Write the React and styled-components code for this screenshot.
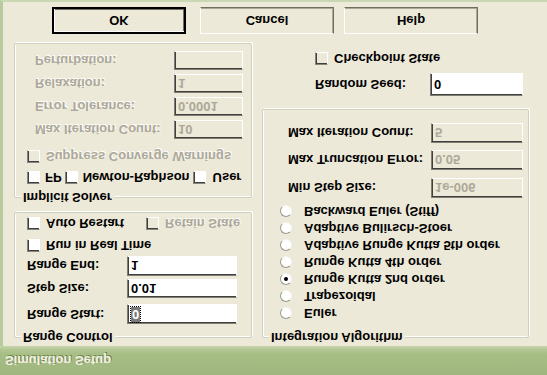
import React from 'react';
import styled, { createGlobalStyle, css } from 'styled-components';

const GlobalStyle = createGlobalStyle`
  html, body {
    margin: 0;
    padding: 0;
    overflow: hidden;
    background: #ece9d8;
  }
`;

const FONT = `'Liberation Sans', Arial, sans-serif`;

const Window = styled.div`
  width: 547px;
  height: 375px;
  box-sizing: border-box;
  display: flex;
  flex-direction: column;
  background: #ece9d8;
  font-family: ${FONT};
  font-size: 13px;
  font-weight: 700;
  color: #000;
  transform: scaleY(-1);
  overflow: hidden;
`;

const TitleBar = styled.div`
  height: 29px;
  flex: 0 0 29px;
  display: flex;
  align-items: center;
  padding-left: 5px;
  background: linear-gradient(to bottom, #9fb77e 0%, #a6bd84 70%, #b5c897 90%, #c7d6ad 100%);
  color: #f4f1e4;
  text-shadow: 1px 1px 0 #6f8550;
  font-size: 13px;
  font-weight: 700;
`;

const Body = styled.div`
  flex: 1;
  display: flex;
  flex-direction: column;
  border-left: 3px solid #b8cb9c;
  border-bottom: 2px solid #c9d8b2;
  padding: 8px 0 0 11px;
`;

const Columns = styled.div`
  display: flex;
  gap: 10px;
`;

const LeftColumn = styled.div`
  width: 238px;
  display: flex;
  flex-direction: column;
  gap: 14px;
`;

const RightColumn = styled.div`
  width: 267px;
  display: flex;
  flex-direction: column;
`;

const Group = styled.div`
  position: relative;
  box-sizing: border-box;
  height: ${({ h }) => h}px;
  border: 1px solid #d0d0bf;
  box-shadow: inset 1px 1px 0 #fff, 1px 1px 0 #fff;
  border-radius: 2px;
  padding: ${({ pad }) => pad};
  display: flex;
  flex-direction: column;
`;

const Legend = styled.span`
  position: absolute;
  top: -8px;
  left: 6px;
  padding: 0 2px;
  background: #ece9d8;
  line-height: 15px;
`;

const FieldRow = styled.div`
  display: flex;
  align-items: center;
  height: ${({ h }) => h || 20}px;
  margin-top: ${({ mt }) => mt || 0}px;
`;

const Label = styled.span`
  width: ${({ w }) => w}px;
  flex: 0 0 ${({ w }) => w}px;
  white-space: nowrap;
  ${({ disabled }) =>
    disabled &&
    css`
      color: #aca899;
      text-shadow: 1px 1px 0 #fff;
    `}
`;

const Input = styled.div`
  box-sizing: border-box;
  width: ${({ w }) => w}px;
  height: 100%;
  border: 1px solid;
  border-color: #7f7d72 #fff #fff #7f7d72;
  box-shadow: inset 1px 1px 0 #404040;
  background: ${({ disabled }) => (disabled ? '#ece9d8' : '#fff')};
  color: ${({ disabled }) => (disabled ? '#aca899' : '#000')};
  display: flex;
  align-items: center;
  padding-left: 3px;
  font-weight: 700;
`;

const Caret = styled.span`
  outline: 1px dotted #000;
  background: #7a7a7a;
  color: #fff;
  padding: 0 1px;
`;

const CheckRow = styled.label`
  display: flex;
  align-items: center;
  height: ${({ h }) => h || 22}px;
  gap: ${({ gap }) => (gap == null ? 6 : gap)}px;
  white-space: nowrap;
`;

const Box = styled.span`
  box-sizing: border-box;
  width: 13px;
  height: 13px;
  flex: 0 0 13px;
  border: 1px solid;
  border-color: #86857a #fff #fff #86857a;
  box-shadow: inset 1px 1px 0 #3f3f3f;
  background: ${({ disabled }) => (disabled ? '#ece9d8' : '#fff')};
`;

const CheckText = styled.span`
  margin-left: ${({ ml }) => ml || 0}px;
  ${({ disabled }) =>
    disabled &&
    css`
      color: #aca899;
      text-shadow: 1px 1px 0 #fff;
    `}
`;

const RadioRow = styled.label`
  display: flex;
  align-items: center;
  height: 17px;
  gap: 6px;
  white-space: nowrap;
`;

const RadioDot = styled.span`
  position: relative;
  box-sizing: border-box;
  width: 12px;
  height: 12px;
  flex: 0 0 12px;
  border-radius: 50%;
  background: #fff;
  border: 1px solid;
  border-color: #9a998f #f4f3ee #f4f3ee #9a998f;
  margin-right: 6px;

  &::after {
    content: '';
    display: ${({ checked }) => (checked ? 'block' : 'none')};
    position: absolute;
    left: 3px;
    top: 3px;
    width: 4px;
    height: 4px;
    border-radius: 50%;
    background: #000;
  }
`;

const ButtonRow = styled.div`
  display: flex;
  margin-top: 9px;
  padding-left: 38px;
`;

const Button = styled.div`
  box-sizing: border-box;
  width: 134px;
  height: 27px;
  margin-right: ${({ mr }) => mr || 0}px;
  display: flex;
  align-items: center;
  justify-content: center;
  background: #ece9d8;
  border: 1px solid;
  border-color: #fff #716f64 #716f64 #fff;
  box-shadow: inset -1px -1px 0 #aca899;
  ${({ primary }) =>
    primary &&
    css`
      border: 2px solid #000;
      box-shadow: inset 1px 1px 0 #fff, inset -1px -1px 0 #716f64;
    `}
`;

const SeedRow = styled.div`
  display: flex;
  align-items: center;
  height: 23px;
  margin-top: 13px;
  padding-left: 53px;
`;

const rangeRows = [
  { label: 'Range Start:', value: '0', mt: 0, focus: true },
  { label: 'Step Size:', value: '0.01', mt: 6 },
  { label: 'Range End:', value: '1', mt: 3 },
];

const solverRows = ['Max Iteration Count:', 'Error Tolerance:', 'Relaxation:', 'Perturbation:'];
const solverValues = ['10', '0.0001', '1', ''];

const algorithms = [
  'Euler',
  'Trapezoidal',
  'Runge Kutta 2nd order',
  'Runge Kutta 4th order',
  'Adaptive Runge Kutta 5th order',
  'Adaptive Bulirsch-Stoer',
  'Backward Euler (Stiff)',
];

const algoFields = [
  { label: 'Min Step Size:', value: '1e-006', mt: 5 },
  { label: 'Max Truncation Error:', value: '0.05', mt: 8 },
  { label: 'Max Iteration Count:', value: '5', mt: 7 },
];

export default function App() {
  return (
    <>
      <GlobalStyle />
      <Window>
        <TitleBar>Simulation Setup</TitleBar>
        <Body>
          <Columns>
            <LeftColumn>
              <Group h={126} pad='13px 0 0 12px'>
                <Legend>Range Control</Legend>
                {rangeRows.map((r) => (
                  <FieldRow key={r.label} mt={r.mt}>
                    <Label w={100}>{r.label}</Label>
                    <Input w={110}>{r.focus ? <Caret>{r.value}</Caret> : r.value}</Input>
                  </FieldRow>
                ))}
                <CheckRow>
                  <Box />
                  <CheckText>Run in Real Time</CheckText>
                </CheckRow>
                <CheckRow gap={0}>
                  <Box />
                  <CheckText ml={6}>Auto Restart</CheckText>
                  <Box disabled style={{ marginLeft: 22 }} />
                  <CheckText ml={6} disabled>
                    Retain State
                  </CheckText>
                </CheckRow>
              </Group>
              <Group h={155} pad='10px 0 0 12px'>
                <Legend>Implicit Solver</Legend>
                <CheckRow h={18} gap={0}>
                  <Box />
                  <CheckText ml={5}>FP</CheckText>
                  <Box style={{ marginLeft: 3 }} />
                  <CheckText ml={5}>Newton-Raphson</CheckText>
                  <Box style={{ marginLeft: 3 }} />
                  <CheckText ml={7}>User</CheckText>
                </CheckRow>
                <CheckRow h={18} style={{ marginTop: 3 }}>
                  <Box disabled />
                  <CheckText disabled>Suppress Converge Warnings</CheckText>
                </CheckRow>
                {solverRows.map((l, i) => (
                  <FieldRow key={l} h={19} mt={i === 0 ? 9 : 4}>
                    <Label w={139} disabled style={{ paddingLeft: 8 }}>
                      {l}
                    </Label>
                    <Input w={69} disabled>
                      {solverValues[i]}
                    </Input>
                  </FieldRow>
                ))}
              </Group>
            </LeftColumn>
            <RightColumn>
              <Group h={229} pad='15px 0 0 17px'>
                <Legend>Integration Algorithm</Legend>
                {algorithms.map((a) => (
                  <RadioRow key={a}>
                    <RadioDot checked={a === 'Runge Kutta 2nd order'} />
                    {a}
                  </RadioRow>
                ))}
                {algoFields.map((f) => (
                  <FieldRow key={f.label} mt={f.mt}>
                    <Label w={143} style={{ paddingLeft: 8 }}>
                      {f.label}
                    </Label>
                    <Input w={92} disabled>
                      {f.value}
                    </Input>
                  </FieldRow>
                ))}
              </Group>
              <SeedRow>
                <Label w={115}>Random Seed:</Label>
                <Input w={93}>0</Input>
              </SeedRow>
              <CheckRow h={14} style={{ marginTop: 7, paddingLeft: 53 }}>
                <Box disabled />
                <CheckText>Checkpoint State</CheckText>
              </CheckRow>
            </RightColumn>
          </Columns>
          <ButtonRow>
            <Button primary mr={14}>OK</Button>
            <Button mr={10}>Cancel</Button>
            <Button>Help</Button>
          </ButtonRow>
        </Body>
      </Window>
    </>
  );
}
